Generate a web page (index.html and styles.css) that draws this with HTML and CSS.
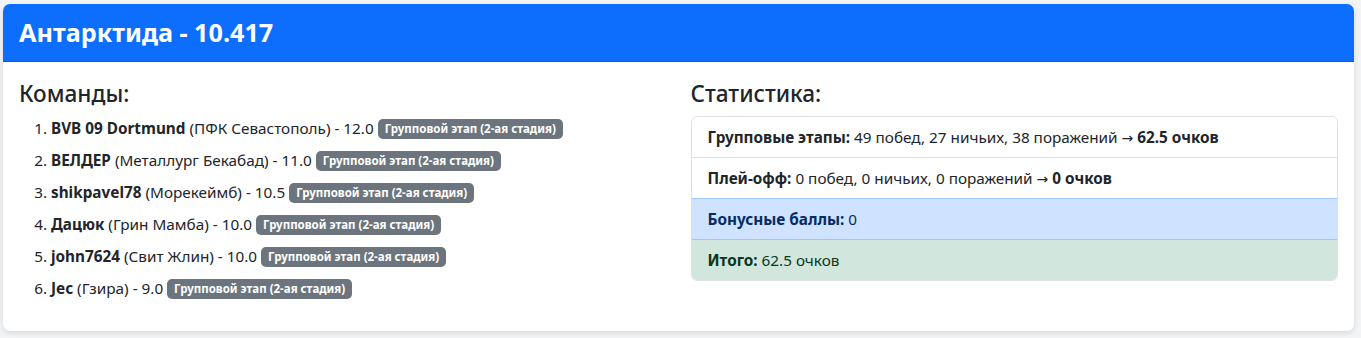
FILE: index.html
```html
<!DOCTYPE html>
<html lang="ru">
<head>
    <meta charset="UTF-8">
    <meta name="viewport" content="width=device-width, initial-scale=1.0">
    <title>Антарктида</title>
    <link rel="stylesheet" href="styles.css">
</head>
<body>
    <div class="card">
        <div class="card-header">
            <h3>Антарктида - 10.417</h3>
        </div>
        <div class="card-body">
            <div class="row">
                <div class="col">
                    <h4>Команды:</h4>
                    <ol class="teams">
                        <li><strong>BVB 09 Dortmund</strong> (ПФК Севастополь) - 12.0 <span class="badge">Групповой этап (2-ая стадия)</span></li>
                        <li><strong>ВЕЛДЕР</strong> (Металлург Бекабад) - 11.0 <span class="badge">Групповой этап (2-ая стадия)</span></li>
                        <li><strong>shikpavel78</strong> (Морекеймб) - 10.5 <span class="badge">Групповой этап (2-ая стадия)</span></li>
                        <li><strong>Дацюк</strong> (Грин Мамба) - 10.0 <span class="badge">Групповой этап (2-ая стадия)</span></li>
                        <li><strong>john7624</strong> (Свит Жлин) - 10.0 <span class="badge">Групповой этап (2-ая стадия)</span></li>
                        <li><strong>Jec</strong> (Гзира) - 9.0 <span class="badge">Групповой этап (2-ая стадия)</span></li>
                    </ol>
                </div>
                <div class="col">
                    <h4>Статистика:</h4>
                    <ul class="list-group">
                        <li class="list-group-item"><strong>Групповые этапы:</strong> 49 побед, 27 ничьих, 38 поражений <span class="arrow">→</span> <strong>62.5 очков</strong></li>
                        <li class="list-group-item"><strong>Плей-офф:</strong> 0 побед, 0 ничьих, 0 поражений <span class="arrow">→</span> <strong>0 очков</strong></li>
                        <li class="list-group-item item-primary"><strong>Бонусные баллы:</strong> 0</li>
                        <li class="list-group-item item-success"><strong>Итого:</strong> 62.5 очков</li>
                    </ul>
                </div>
            </div>
        </div>
    </div>
</body>
</html>
```

FILE: styles.css
```css
body {
    margin: 0;
    padding: 4px 7px 6px 3px;
    background-color: #f3f4f6;
    font-family: 'Noto Sans', 'Open Sans', sans-serif;
    font-size: 15.3px;
    line-height: 24px;
    color: #212529;
}
.card {
    background-color: white;
    border-radius: 7px;
    box-shadow: 0 2px 6px rgba(0,0,0,0.12);
    overflow: hidden;
}
.card-header {
    background-color: #0d6efd;
    color: white;
    padding: 12px 16px;
    border-bottom: 1px solid #0b5ed7;
}
.card-header h3 {
    margin: 0;
    font-size: 25.2px;
    line-height: 33px;
    font-weight: 700;
}
.card-body {
    padding: 17px 16px 16px;
}
.row {
    display: flex;
    gap: 24px;
}
.col {
    flex: 1;
    min-width: 0;
}
h4 {
    margin: 0 0 8px 0;
    font-size: 22.6px;
    line-height: 29px;
    font-weight: 500;
}
.teams {
    margin: 0 0 15px 0;
    padding-left: 32px;
}
.teams li {
    margin-bottom: 8px;
}
.teams li:last-child {
    margin-bottom: 0;
}
.badge {
    display: inline-block;
    background-color: #6c757d;
    color: white;
    font-size: 11.5px;
    font-weight: 700;
    line-height: 1;
    padding: 4px 7px;
    border-radius: 5px;
    vertical-align: 1px;
}
.arrow {
    font-family: 'DejaVu Sans', sans-serif;
    font-size: 14px;
    line-height: 0;
}
.list-group {
    list-style: none;
    margin: 0;
    padding: 0;
    border: 1px solid #dee2e6;
    border-radius: 6px;
    overflow: hidden;
}
.list-group-item {
    padding: 8px 16px;
    border-top: 1px solid #dee2e6;
}
.list-group-item:first-child {
    border-top: none;
}
.item-primary {
    background-color: #cfe2ff;
    color: #052c65;
    border-top-color: #9ec5fe;
}
.item-success {
    background-color: #d1e7dd;
    color: #0a3622;
    border-top-color: #a3cfbb;
}
```
